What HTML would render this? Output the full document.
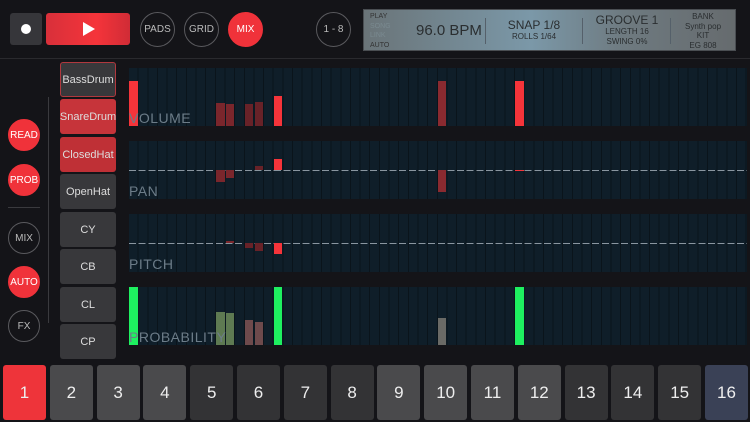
<!DOCTYPE html>
<html><head><meta charset="utf-8"><style>
*{margin:0;padding:0;box-sizing:border-box}
body{width:750px;height:422px;background:#141418;overflow:hidden;position:relative;font-family:"Liberation Sans",sans-serif;color:#ddd}
.a{position:absolute}
.circ{position:absolute;border-radius:50%;border:1px solid #5a5a5e;color:#bbb;font-size:10px;display:flex;align-items:center;justify-content:center}
.red{background:#f0323a;border-color:#f0323a;color:#fff}
.btn{position:absolute;left:60px;width:56px;height:35px;border-radius:3px;background:#38383b;color:#ddd;font-size:11px;display:flex;align-items:center;justify-content:center}
.lane{position:absolute;left:129px;width:618px;height:58px;background:repeating-linear-gradient(90deg,#0f1e29 0 8.65px,#0a141b 8.65px 9.65px)}
.lbl{position:absolute;left:0;bottom:0;font-size:14px;color:#6c7c88;letter-spacing:0.5px;white-space:nowrap;line-height:15px;z-index:5}
.b{position:absolute;width:8.65px}
.cl{position:absolute;left:0;width:618px;height:1px;background:repeating-linear-gradient(90deg,#8a96a0 0 7px,transparent 7px 9.65px)}
.pad{position:absolute;top:365px;width:43px;height:55px;border-radius:3px;display:flex;align-items:center;justify-content:center;font-size:17px;color:#eee}
</style></head><body>
<div class="a" style="left:0;top:58px;width:750px;height:1px;background:#2a2a2e"></div>
<div class="a" style="left:10px;top:13px;width:32px;height:32px;background:#36363a;border-radius:3px"><div class="a" style="left:11px;top:11px;width:10px;height:10px;border-radius:50%;background:#fff"></div></div>
<div class="a" style="left:46px;top:13px;width:84px;height:32px;border-radius:3px;background:linear-gradient(90deg,#d8303a,#f5343a 60%,#d02c36)"><div class="a" style="left:37px;top:9px;width:0;height:0;border-left:12px solid #fff;border-top:7px solid transparent;border-bottom:7px solid transparent"></div></div>
<div class="circ" style="left:140px;top:12px;width:35px;height:35px">PADS</div>
<div class="circ" style="left:184px;top:12px;width:35px;height:35px">GRID</div>
<div class="circ red" style="left:228px;top:12px;width:35px;height:35px">MIX</div>
<div class="circ" style="left:316px;top:12px;width:35px;height:35px">1 - 8</div>
<div class="a" style="left:363px;top:9px;width:373px;height:42px;background:linear-gradient(90deg,#6a7478,#7b98a8 45%,#6e7a80 70%,#666b6e);border:1px solid #4a4e52">
 <div class="a" style="left:6px;top:2px;font-size:7px;line-height:9.5px;color:#333">PLAY<br><span style="color:#7a8a90">SONG</span><br><span style="color:#7a8a90">LINK</span><br>AUTO</div>
 <div class="a" style="left:52px;top:12px;font-size:15px;color:#2a2e30">96.0 BPM</div>
 <div class="a" style="left:121px;top:8px;width:1px;height:26px;background:#55606a"></div>
 <div class="a" style="left:122px;top:8px;width:96px;text-align:center;font-size:12px;color:#2a2e30">SNAP 1/8<div style="font-size:8px">ROLLS 1/64</div></div>
 <div class="a" style="left:218px;top:8px;width:1px;height:26px;background:#55606a"></div>
 <div class="a" style="left:219px;top:4px;width:88px;text-align:center;font-size:12px;line-height:13px;color:#2a2e30">GROOVE 1<div style="font-size:8px;line-height:10px">LENGTH 16<br>SWING 0%</div></div>
 <div class="a" style="left:306px;top:8px;width:1px;height:26px;background:#55606a"></div>
 <div class="a" style="left:307px;top:2px;width:64px;text-align:center;font-size:8px;line-height:9.5px;color:#2a2e30">BANK<br>Synth pop<br>KIT<br>EG 808</div>
</div>
<div class="circ red" style="left:8px;top:119px;width:32px;height:32px">READ</div>
<div class="circ red" style="left:8px;top:164px;width:32px;height:32px">PROB</div>
<div class="a" style="left:8px;top:207px;width:32px;height:1px;background:#3a3a3e"></div>
<div class="circ" style="left:8px;top:222px;width:32px;height:32px">MIX</div>
<div class="circ red" style="left:8px;top:266px;width:32px;height:32px">AUTO</div>
<div class="circ" style="left:8px;top:310px;width:32px;height:32px">FX</div>
<div class="a" style="left:48px;top:97px;width:1px;height:226px;background:#3a3a3e"></div>
<div class="btn" style="top:62px;border:1px solid #b0383e">BassDrum</div>
<div class="btn" style="top:99px;background:#c6343a">SnareDrum</div>
<div class="btn" style="top:137px;background:#bf3036">ClosedHat</div>
<div class="btn" style="top:174px">OpenHat</div>
<div class="btn" style="top:212px">CY</div>
<div class="btn" style="top:249px">CB</div>
<div class="btn" style="top:287px">CL</div>
<div class="btn" style="top:324px">CP</div>

<div class="lane" style="top:68px">
 <div class="b" style="left:0;top:13px;height:45px;background:#f5343a"></div>
 <div class="b" style="left:86.9px;top:35px;height:23px;background:#7a262c"></div>
 <div class="b" style="left:96.5px;top:36px;height:22px;background:#7a262c"></div>
 <div class="b" style="left:115.8px;top:36px;height:22px;background:#682228"></div>
 <div class="b" style="left:125.5px;top:34px;height:24px;background:#682228"></div>
 <div class="b" style="left:144.8px;top:28px;height:30px;background:#f5343a"></div>
 <div class="b" style="left:308.8px;top:13px;height:45px;background:#8a2a30"></div>
 <div class="b" style="left:386px;top:13px;height:45px;background:#f5343a"></div>
 <div class="lbl">VOLUME</div>
</div>
<div class="lane" style="top:141px">
 <div class="cl" style="top:29px"></div>
 <div class="b" style="left:86.9px;top:29px;height:12px;background:#7a262c"></div>
 <div class="b" style="left:96.5px;top:29px;height:8px;background:#7a262c"></div>
 <div class="b" style="left:125.5px;top:25px;height:4px;background:#682228"></div>
 <div class="b" style="left:144.8px;top:18px;height:11px;background:#f5343a"></div>
 <div class="b" style="left:308.8px;top:29px;height:22px;background:#8a2a30"></div>
 <div class="b" style="left:386px;top:29px;height:1px;background:#f5343a"></div>
 <div class="lbl">PAN</div>
</div>
<div class="lane" style="top:214px">
 <div class="cl" style="top:29px"></div>
 <div class="b" style="left:96.5px;top:27px;height:2px;background:#7a262c"></div>
 <div class="b" style="left:115.8px;top:29px;height:5px;background:#682228"></div>
 <div class="b" style="left:125.5px;top:29px;height:8px;background:#682228"></div>
 <div class="b" style="left:144.8px;top:29px;height:11px;background:#f5343a"></div>
 <div class="lbl">PITCH</div>
</div>
<div class="lane" style="top:287px">
 <div class="b" style="left:0;top:0;height:58px;background:#1ef060"></div>
 <div class="b" style="left:86.9px;top:25px;height:33px;background:#5e7a52"></div>
 <div class="b" style="left:96.5px;top:26px;height:32px;background:#5e7a52"></div>
 <div class="b" style="left:115.8px;top:33px;height:25px;background:#6e4a4c"></div>
 <div class="b" style="left:125.5px;top:35px;height:23px;background:#6e4a4c"></div>
 <div class="b" style="left:144.8px;top:0;height:58px;background:#1ef060"></div>
 <div class="b" style="left:308.8px;top:31px;height:27px;background:#6a6a66"></div>
 <div class="b" style="left:386px;top:0;height:58px;background:#1ef060"></div>
 <div class="lbl">PROBABILITY</div>
</div>

<div class="pad" style="left:3px;background:#ee343a">1</div>
<div class="pad" style="left:49.8px;background:#4a4a4c">2</div>
<div class="pad" style="left:96.6px;background:#4a4a4c">3</div>
<div class="pad" style="left:143.4px;background:#4a4a4c">4</div>
<div class="pad" style="left:190.2px;background:#333335">5</div>
<div class="pad" style="left:237px;background:#333335">6</div>
<div class="pad" style="left:283.8px;background:#333335">7</div>
<div class="pad" style="left:330.6px;background:#333335">8</div>
<div class="pad" style="left:377.4px;background:#4a4a4c">9</div>
<div class="pad" style="left:424.2px;background:#4a4a4c">10</div>
<div class="pad" style="left:471px;background:#4a4a4c">11</div>
<div class="pad" style="left:517.8px;background:#4a4a4c">12</div>
<div class="pad" style="left:564.6px;background:#333335">13</div>
<div class="pad" style="left:611.4px;background:#333335">14</div>
<div class="pad" style="left:658.2px;background:#333335">15</div>
<div class="pad" style="left:705px;background:#3a4156">16</div>
</body></html>
